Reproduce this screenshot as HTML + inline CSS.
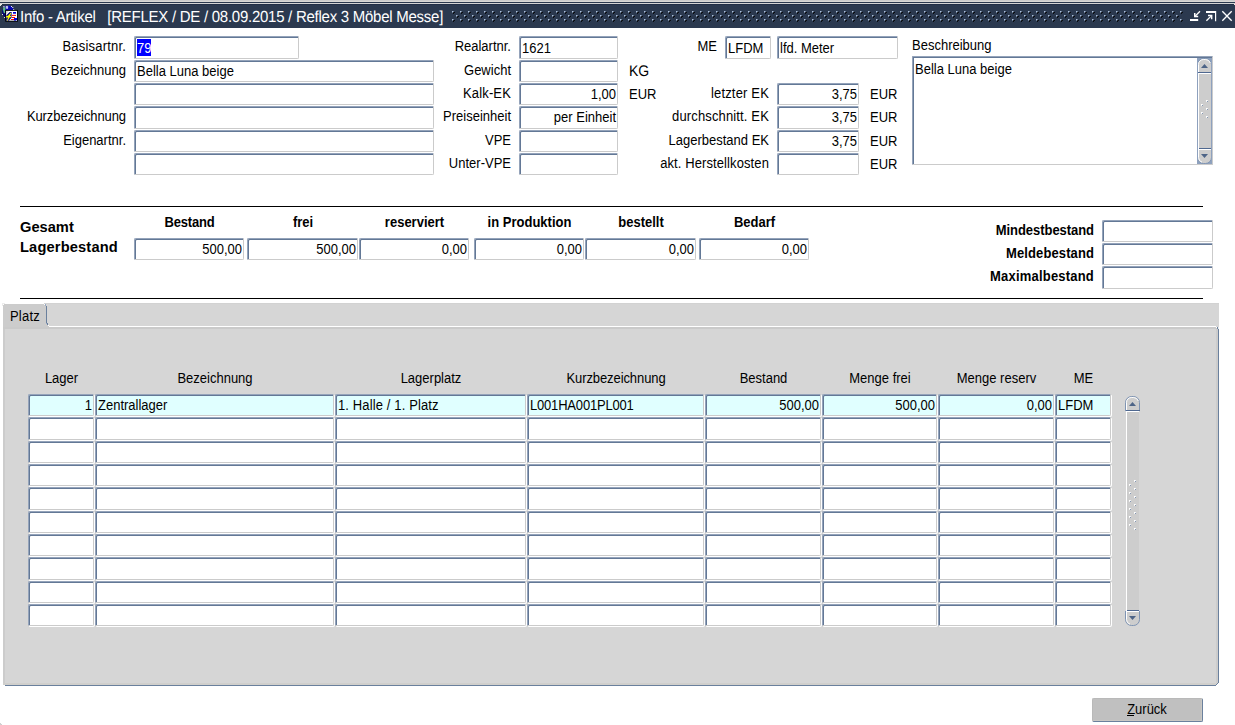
<!DOCTYPE html>
<html lang="de"><head><meta charset="utf-8"><title>Info - Artikel</title>
<style>
html,body{margin:0;padding:0;background:#fff;}
body{width:1235px;height:725px;position:relative;overflow:hidden;font-family:"Liberation Sans",sans-serif;font-size:13px;color:#000;}
.t{position:absolute;white-space:pre;}
.s{transform:scaleY(1.07);}
.f{position:absolute;background:#fff;border:1px solid;border-color:#94a3ba #cbcbcb #cbcbcb #94a3ba;border-radius:2px 1px 2px 1px;box-shadow:inset 1px 1px 0 #637896,1px 1px 0 #fff;}
.sel{position:absolute;background:#0000ff;}
.b{position:absolute;}
svg{position:absolute;display:block;}
</style></head><body>

<div class="b" style="left:0;top:0;width:1235px;height:1px;background:#cccccc"></div><div class="b" style="left:0;top:1px;width:1235px;height:1px;background:#d9d8d5"></div>
<div class="b" style="left:0;top:2px;width:1235px;height:1px;background:#2b394f"></div>
<div class="b" style="left:0;top:3px;width:1235px;height:1px;background:#d4d4d4"></div>
<div class="b" style="left:0;top:4px;width:1235px;height:24px;background:#2b394f"></div><div class="b" style="left:0;top:4px;width:1235px;height:1px;background:#212e46"></div>
<div class="b" style="left:0;top:4px;width:2px;height:1px;background:#e8e8e0"></div><div class="b" style="left:0;top:5px;width:1px;height:1px;background:#e8e8e0"></div>
<div class="b" style="left:1234px;top:4px;width:1px;height:1px;background:#e8e8e0"></div>
<div class="b" style="left:0;top:723px;width:1px;height:2px;background:#d0d0d0"></div><div class="b" style="left:1px;top:724px;width:1px;height:1px;background:#d0d0d0"></div>
<svg style="left:0px;top:4px" width="20" height="20" viewBox="0 4 20 20">
<circle cx="8.2" cy="11.4" r="5.9" fill="#0808b4"/>
<path d="M2.2 10.5Q2 14 4 16.5L5.2 17V10.5Z" fill="#04046e"/>
<path d="M3.2 7.6L5.6 6.9L5.4 9.5L4.9 13.6L3.6 12.2L3 9.8Z" fill="#5fbd85"/>
<path d="M3 6.2L4.4 5.9L4.8 7L3.4 7.6Z M5.6 6.2L7.2 5.8L8.2 6.6L8 8.8L6.4 9L6 7.4Z" fill="#c4c0f2"/>
<rect x="11" y="6" width="1" height="1" fill="#e8e8ff"/><rect x="12.3" y="7" width="1" height="1" fill="#fff"/><rect x="13.2" y="9" width="1" height="1" fill="#f0f0e8"/>
<rect x="2" y="14" width="1" height="1" fill="#e0e0e0"/><rect x="4" y="17" width="1" height="1" fill="#e0e0e0"/>
<rect x="5.2" y="9.9" width="12.7" height="11.8" fill="#000"/>
<rect x="6.1" y="10.9" width="10.9" height="9.8" fill="#fff"/>
<path d="M6.1 20.7V15.5L9.6 12H11.6V17.6L9 20.7Z" fill="#0a0a7c"/>
<path d="M6.1 11.6Q7.2 11 8.6 11.4L6.1 13.8Z" fill="#c8c8c8"/>
<path d="M10.7 12.7L11.3 13.3L9.9 15.9H11.2V17L9.6 17.4L7.6 20.8L6.8 20.5L8.2 17.5H6.1V16.2L8 15.8Z" fill="#ffff00"/>
<rect x="13" y="12" width="3" height="1.7" fill="#0000d8"/>
<rect x="12" y="14.9" width="4" height="1" fill="#ff0000"/>
<rect x="12" y="17" width="3" height="1" fill="#ff0000"/>
<rect x="11" y="19" width="3" height="1" fill="#ff0000"/>
<rect x="14" y="18" width="3" height="2.6" fill="#0000d8"/>
<rect x="16.1" y="20" width="0.9" height="0.7" fill="#fff"/>
</svg>
<div class="t" style="top:9px;font-size:15px;line-height:18px;transform-origin:0 14px;color:#fff;letter-spacing:-0.26px;left:20px;text-rendering:geometricPrecision;transform:scaleY(1.07);">Info - Artikel   [REFLEX / DE / 08.09.2015 / Reflex 3 Möbel Messe]</div>
<svg style="left:452px;top:11px" width="731" height="11" shape-rendering="crispEdges">
<defs><pattern id="td" x="0" y="0" width="8" height="8" patternUnits="userSpaceOnUse">
<g id="dt"><rect x="0" y="0" width="2" height="2" fill="#9fb0cc" fill-opacity=".6"/><rect x="0" y="0" width="1" height="1" fill="#adc0d9"/><rect x="1" y="1" width="1" height="1" fill="#000" fill-opacity=".75"/><rect x="2" y="1" width="1" height="1" fill="#000" fill-opacity=".8"/><rect x="1" y="2" width="1" height="1" fill="#000" fill-opacity=".8"/></g>
<use href="#dt" x="4" y="4"/>
</pattern></defs><rect width="731" height="11" fill="url(#td)"/></svg>
<svg style="left:1188px;top:9px" width="46" height="14" viewBox="1188 9 46 14" fill="none" stroke="#fff">
<path d="M1190 20h8.2" stroke-width="2"/>
<path d="M1200 11.3L1194.6 16.7" stroke-width="1.3"/>
<path d="M1194 13v4.2h4.2v-1.5h-2.7v-2.7z" fill="#fff" stroke="none"/>
<path d="M1206 12h10" stroke-width="2"/>
<path d="M1215.6 11v10.2" stroke-width="1.2"/>
<path d="M1206.4 20.8L1211.6 15.6" stroke-width="1.3"/>
<path d="M1208 14.8h4.4v4.4h-1.5v-2.9h-2.9z" fill="#fff" stroke="none"/>
<path d="M1222.3 11.3L1231.7 20.7M1231.7 11.3L1222.3 20.7" stroke-width="1.35"/>
</svg>
<div class="t s" style="top:39px;font-size:13px;line-height:16px;transform-origin:0 12px;letter-spacing:0.19px;right:1109px;">Basisartnr.</div>
<div class="t s" style="top:63px;font-size:13px;line-height:16px;transform-origin:0 12px;right:1109px;">Bezeichnung</div>
<div class="t s" style="top:109px;font-size:13px;line-height:16px;transform-origin:0 12px;letter-spacing:-0.09px;right:1109px;">Kurzbezeichnung</div>
<div class="t s" style="top:133px;font-size:13px;line-height:16px;transform-origin:0 12px;right:1109px;">Eigenartnr.</div>
<div class="f" style="left:134px;top:36px;width:163px;height:21px;"></div>
<div class="sel" style="left:137px;top:39px;width:14px;height:17px"></div>
<div class="t s" style="top:41px;font-size:13px;line-height:16px;transform-origin:0 12px;color:#fff;left:137px;">79</div>
<div class="f" style="left:134px;top:60px;width:298px;height:20px;"></div>
<div class="t s" style="top:64px;font-size:13px;line-height:16px;transform-origin:0 12px;left:137px;">Bella Luna beige</div>
<div class="f" style="left:134px;top:83px;width:298px;height:20px;"></div>
<div class="f" style="left:134px;top:106px;width:298px;height:21px;"></div>
<div class="f" style="left:134px;top:130px;width:298px;height:20px;"></div>
<div class="f" style="left:134px;top:153px;width:298px;height:20px;"></div>
<div class="t s" style="top:39px;font-size:13px;line-height:16px;transform-origin:0 12px;right:724px;">Realartnr.</div>
<div class="t s" style="top:63px;font-size:13px;line-height:16px;transform-origin:0 12px;right:724px;">Gewicht</div>
<div class="t s" style="top:86px;font-size:13px;line-height:16px;transform-origin:0 12px;letter-spacing:0.14px;right:724px;">Kalk-EK</div>
<div class="t s" style="top:109px;font-size:13px;line-height:16px;transform-origin:0 12px;right:724px;">Preiseinheit</div>
<div class="t s" style="top:133px;font-size:13px;line-height:16px;transform-origin:0 12px;right:724px;">VPE</div>
<div class="t s" style="top:156px;font-size:13px;line-height:16px;transform-origin:0 12px;right:724px;">Unter-VPE</div>
<div class="f" style="left:519px;top:36px;width:97px;height:21px;"></div>
<div class="t s" style="top:41px;font-size:13px;line-height:16px;transform-origin:0 12px;left:522px;">1621</div>
<div class="f" style="left:519px;top:60px;width:97px;height:20px;"></div>
<div class="f" style="left:519px;top:83px;width:97px;height:20px;"></div>
<div class="t s" style="top:87px;font-size:13px;line-height:16px;transform-origin:0 12px;right:619px;">1,00</div>
<div class="f" style="left:519px;top:106px;width:97px;height:21px;"></div>
<div class="t s" style="top:110px;font-size:13px;line-height:16px;transform-origin:0 12px;right:619px;">per Einheit</div>
<div class="f" style="left:519px;top:130px;width:97px;height:20px;"></div>
<div class="f" style="left:519px;top:153px;width:97px;height:20px;"></div>
<div class="t" style="top:63px;font-size:14px;line-height:17px;transform-origin:0 13px;left:629px;text-rendering:geometricPrecision;transform:scaleY(1.1);">KG</div>
<div class="t s" style="top:87px;font-size:13px;line-height:16px;transform-origin:0 12px;left:629px;">EUR</div>
<div class="t s" style="top:39px;font-size:13px;line-height:16px;transform-origin:0 12px;right:518px;">ME</div>
<div class="f" style="left:725px;top:36px;width:44px;height:21px;"></div>
<div class="t s" style="top:41px;font-size:13px;line-height:16px;transform-origin:0 12px;left:728px;">LFDM</div>
<div class="f" style="left:777px;top:36px;width:119px;height:21px;"></div>
<div class="t s" style="top:41px;font-size:13px;line-height:16px;transform-origin:0 12px;left:780px;">lfd. Meter</div>
<div class="t s" style="top:86px;font-size:13px;line-height:16px;transform-origin:0 12px;letter-spacing:0.17px;right:466px;">letzter EK</div>
<div class="f" style="left:777px;top:83px;width:80px;height:20px;"></div>
<div class="t s" style="top:87px;font-size:13px;line-height:16px;transform-origin:0 12px;right:378px;">3,75</div>
<div class="t s" style="top:87px;font-size:13px;line-height:16px;transform-origin:0 12px;left:870px;">EUR</div>
<div class="t s" style="top:109px;font-size:13px;line-height:16px;transform-origin:0 12px;letter-spacing:0.14px;right:466px;">durchschnitt. EK</div>
<div class="f" style="left:777px;top:106px;width:80px;height:21px;"></div>
<div class="t s" style="top:110px;font-size:13px;line-height:16px;transform-origin:0 12px;right:378px;">3,75</div>
<div class="t s" style="top:110px;font-size:13px;line-height:16px;transform-origin:0 12px;left:870px;">EUR</div>
<div class="t s" style="top:133px;font-size:13px;line-height:16px;transform-origin:0 12px;right:466px;">Lagerbestand EK</div>
<div class="f" style="left:777px;top:130px;width:80px;height:20px;"></div>
<div class="t s" style="top:134px;font-size:13px;line-height:16px;transform-origin:0 12px;right:378px;">3,75</div>
<div class="t s" style="top:134px;font-size:13px;line-height:16px;transform-origin:0 12px;left:870px;">EUR</div>
<div class="t s" style="top:156px;font-size:13px;line-height:16px;transform-origin:0 12px;letter-spacing:0.1px;right:466px;">akt. Herstellkosten</div>
<div class="f" style="left:777px;top:153px;width:80px;height:20px;"></div>
<div class="t s" style="top:157px;font-size:13px;line-height:16px;transform-origin:0 12px;left:870px;">EUR</div>
<div class="t s" style="top:38px;font-size:13px;line-height:16px;transform-origin:0 12px;left:912px;">Beschreibung</div>
<div class="f" style="left:912px;top:56px;width:299px;height:107px;border-radius:1px;box-shadow:inset 1px 1px 0 #637896"></div>
<div class="t s" style="top:62px;font-size:13px;line-height:16px;transform-origin:0 12px;left:915px;">Bella Luna beige</div>
<div class="b" style="left:20px;top:206px;width:1183px;height:1px;background:#000"></div>
<div class="b" style="left:20px;top:298px;width:1183px;height:1px;background:#000"></div>
<div class="t" style="top:219px;font-size:14.67px;line-height:17px;transform-origin:0 13px;font-weight:bold;left:20px;">Gesamt</div>
<div class="t" style="top:239px;font-size:14.67px;line-height:17px;transform-origin:0 13px;font-weight:bold;letter-spacing:0.15px;left:20px;">Lagerbestand</div>
<div class="t s" style="top:215px;font-size:13px;line-height:16px;transform-origin:0 12px;font-weight:bold;letter-spacing:-0.2px;left:39.5px;width:300px;text-align:center;">Bestand</div>
<div class="f" style="left:134px;top:238px;width:108px;height:20px;"></div>
<div class="t s" style="top:242px;font-size:13px;line-height:16px;transform-origin:0 12px;right:993px;">500,00</div>
<div class="t s" style="top:215px;font-size:13px;line-height:16px;transform-origin:0 12px;font-weight:bold;left:153.0px;width:300px;text-align:center;">frei</div>
<div class="f" style="left:247px;top:238px;width:109px;height:20px;"></div>
<div class="t s" style="top:242px;font-size:13px;line-height:16px;transform-origin:0 12px;right:879px;">500,00</div>
<div class="t s" style="top:215px;font-size:13px;line-height:16px;transform-origin:0 12px;font-weight:bold;left:264.5px;width:300px;text-align:center;">reserviert</div>
<div class="f" style="left:359px;top:238px;width:108px;height:20px;"></div>
<div class="t s" style="top:242px;font-size:13px;line-height:16px;transform-origin:0 12px;right:768px;">0,00</div>
<div class="t s" style="top:215px;font-size:13px;line-height:16px;transform-origin:0 12px;font-weight:bold;left:379.5px;width:300px;text-align:center;">in Produktion</div>
<div class="f" style="left:474px;top:238px;width:108px;height:20px;"></div>
<div class="t s" style="top:242px;font-size:13px;line-height:16px;transform-origin:0 12px;right:653px;">0,00</div>
<div class="t s" style="top:215px;font-size:13px;line-height:16px;transform-origin:0 12px;font-weight:bold;left:491.0px;width:300px;text-align:center;">bestellt</div>
<div class="f" style="left:585px;top:238px;width:109px;height:20px;"></div>
<div class="t s" style="top:242px;font-size:13px;line-height:16px;transform-origin:0 12px;right:541px;">0,00</div>
<div class="t s" style="top:215px;font-size:13px;line-height:16px;transform-origin:0 12px;font-weight:bold;left:604.5px;width:300px;text-align:center;">Bedarf</div>
<div class="f" style="left:699px;top:238px;width:108px;height:20px;"></div>
<div class="t s" style="top:242px;font-size:13px;line-height:16px;transform-origin:0 12px;right:428px;">0,00</div>
<div class="t s" style="top:223px;font-size:13px;line-height:16px;transform-origin:0 12px;font-weight:bold;letter-spacing:-0.05px;right:141px;">Mindestbestand</div>
<div class="f" style="left:1102px;top:220px;width:109px;height:20px;"></div>
<div class="t s" style="top:246px;font-size:13px;line-height:16px;transform-origin:0 12px;font-weight:bold;letter-spacing:0.1px;right:141px;">Meldebestand</div>
<div class="f" style="left:1102px;top:243px;width:109px;height:20px;"></div>
<div class="t s" style="top:269px;font-size:13px;line-height:16px;transform-origin:0 12px;font-weight:bold;letter-spacing:0.2px;right:141px;">Maximalbestand</div>
<div class="f" style="left:1102px;top:266px;width:109px;height:21px;"></div>
<div class="b" style="left:3px;top:304px;width:1216px;height:382px;background:#d6d6d6"></div>
<div class="b" style="left:44px;top:303px;width:1175px;height:1px;background:#d2d2d2"></div>
<div class="b" style="left:3px;top:304px;width:43px;height:25px;background:#cccccc"></div>
<div class="b" style="left:2px;top:303px;width:3px;height:1px;background:#ececec"></div><div class="b" style="left:2px;top:304px;width:1px;height:2px;background:#ececec"></div><div class="b" style="left:3px;top:304px;width:1px;height:1px;background:#fff"></div>
<div class="b" style="left:3px;top:327px;width:1215px;height:2px;background:#cacaca"></div>
<div class="b" style="left:3px;top:329px;width:2px;height:356px;background:#cccccc"></div>
<div class="b" style="left:1216px;top:329px;width:2px;height:356px;background:#cccccc"></div>
<div class="b" style="left:3px;top:683px;width:1215px;height:2px;background:#d0cfcc"></div>
<div class="b" style="left:5px;top:685px;width:1211px;height:1px;background:#6a809d"></div>
<div class="b" style="left:1218px;top:329px;width:1px;height:354px;background:#6a809d"></div>
<div class="b" style="left:1216px;top:685px;width:3px;height:1px;background:#fff"></div><div class="b" style="left:1217px;top:684px;width:2px;height:1px;background:#fff"></div><div class="b" style="left:1218px;top:683px;width:1px;height:1px;background:#fff"></div>
<div class="b" style="left:1217px;top:683px;width:1px;height:1px;background:#6a809d"></div><div class="b" style="left:1216px;top:684px;width:1px;height:1px;background:#6a809d"></div>
<div class="b" style="left:3px;top:685px;width:2px;height:1px;background:#fff"></div>
<div class="b" style="left:1217px;top:327px;width:1px;height:2px;background:#6a809d"></div><div class="b" style="left:1216px;top:327px;width:1px;height:1px;background:#fff"></div><div class="b" style="left:1218px;top:327px;width:1px;height:2px;background:#ececec"></div>
<div class="b" style="left:49px;top:326px;width:1167px;height:1px;background:#fff"></div>
<div class="b" style="left:46px;top:306px;width:1px;height:17px;background:#6a809d"></div>
<div class="b" style="left:45px;top:304px;width:1px;height:2px;background:#9aaac3"></div><div class="b" style="left:44px;top:304px;width:1px;height:1px;background:#fff"></div>
<div class="b" style="left:47px;top:323px;width:1px;height:2px;background:#6a809d"></div><div class="b" style="left:46px;top:323px;width:1px;height:1px;background:#9aaac3"></div>
<div class="b" style="left:48px;top:325px;width:1px;height:1px;background:#fff"></div>
<div class="b" style="left:46px;top:304px;width:1px;height:2px;background:#d6d6d6"></div><div class="b" style="left:46px;top:324px;width:1px;height:3px;background:#cccccc"></div><div class="b" style="left:47px;top:325px;width:1px;height:2px;background:#cccccc"></div><div class="b" style="left:48px;top:326px;width:1px;height:1px;background:#cccccc"></div>
<div class="t s" style="top:309px;font-size:13px;line-height:16px;transform-origin:0 12px;letter-spacing:0.2px;left:10px;">Platz</div>
<div class="t s" style="top:371px;font-size:13px;line-height:16px;transform-origin:0 12px;left:-88.5px;width:300px;text-align:center;">Lager</div>
<div class="t s" style="top:371px;font-size:13px;line-height:16px;transform-origin:0 12px;left:65.0px;width:300px;text-align:center;">Bezeichnung</div>
<div class="t s" style="top:371px;font-size:13px;line-height:16px;transform-origin:0 12px;left:281.0px;width:300px;text-align:center;">Lagerplatz</div>
<div class="t s" style="top:371px;font-size:13px;line-height:16px;transform-origin:0 12px;letter-spacing:-0.09px;left:466.0px;width:300px;text-align:center;">Kurzbezeichnung</div>
<div class="t s" style="top:371px;font-size:13px;line-height:16px;transform-origin:0 12px;left:613.5px;width:300px;text-align:center;">Bestand</div>
<div class="t s" style="top:371px;font-size:13px;line-height:16px;transform-origin:0 12px;left:730.0px;width:300px;text-align:center;">Menge frei</div>
<div class="t s" style="top:371px;font-size:13px;line-height:16px;transform-origin:0 12px;left:846.5px;width:300px;text-align:center;">Menge reserv</div>
<div class="t s" style="top:371px;font-size:13px;line-height:16px;transform-origin:0 12px;left:933.5px;width:300px;text-align:center;">ME</div>
<div class="f" style="left:28px;top:394px;width:64px;height:20px;background:#e0ffff;"></div>
<div class="t s" style="top:398px;font-size:13px;line-height:16px;transform-origin:0 12px;right:1143px;">1</div>
<div class="f" style="left:95px;top:394px;width:237px;height:20px;background:#e0ffff;"></div>
<div class="t s" style="top:398px;font-size:13px;line-height:16px;transform-origin:0 12px;left:98px;">Zentrallager</div>
<div class="f" style="left:335px;top:394px;width:189px;height:20px;background:#e0ffff;"></div>
<div class="t s" style="top:398px;font-size:13px;line-height:16px;transform-origin:0 12px;letter-spacing:0.13px;left:338px;">1. Halle / 1. Platz</div>
<div class="f" style="left:527px;top:394px;width:175px;height:20px;background:#e0ffff;"></div>
<div class="t s" style="top:398px;font-size:13px;line-height:16px;transform-origin:0 12px;letter-spacing:-0.19px;left:530px;">L001HA001PL001</div>
<div class="f" style="left:705px;top:394px;width:114px;height:20px;background:#e0ffff;"></div>
<div class="t s" style="top:398px;font-size:13px;line-height:16px;transform-origin:0 12px;right:416px;">500,00</div>
<div class="f" style="left:822px;top:394px;width:113px;height:20px;background:#e0ffff;"></div>
<div class="t s" style="top:398px;font-size:13px;line-height:16px;transform-origin:0 12px;right:300px;">500,00</div>
<div class="f" style="left:938px;top:394px;width:114px;height:20px;background:#e0ffff;"></div>
<div class="t s" style="top:398px;font-size:13px;line-height:16px;transform-origin:0 12px;right:183px;">0,00</div>
<div class="f" style="left:1055px;top:394px;width:54px;height:20px;background:#e0ffff;"></div>
<div class="t s" style="top:398px;font-size:13px;line-height:16px;transform-origin:0 12px;left:1058px;">LFDM</div>
<div class="f" style="left:28px;top:417px;width:64px;height:21px;"></div>
<div class="f" style="left:95px;top:417px;width:237px;height:21px;"></div>
<div class="f" style="left:335px;top:417px;width:189px;height:21px;"></div>
<div class="f" style="left:527px;top:417px;width:175px;height:21px;"></div>
<div class="f" style="left:705px;top:417px;width:114px;height:21px;"></div>
<div class="f" style="left:822px;top:417px;width:113px;height:21px;"></div>
<div class="f" style="left:938px;top:417px;width:114px;height:21px;"></div>
<div class="f" style="left:1055px;top:417px;width:54px;height:21px;"></div>
<div class="f" style="left:28px;top:441px;width:64px;height:20px;"></div>
<div class="f" style="left:95px;top:441px;width:237px;height:20px;"></div>
<div class="f" style="left:335px;top:441px;width:189px;height:20px;"></div>
<div class="f" style="left:527px;top:441px;width:175px;height:20px;"></div>
<div class="f" style="left:705px;top:441px;width:114px;height:20px;"></div>
<div class="f" style="left:822px;top:441px;width:113px;height:20px;"></div>
<div class="f" style="left:938px;top:441px;width:114px;height:20px;"></div>
<div class="f" style="left:1055px;top:441px;width:54px;height:20px;"></div>
<div class="f" style="left:28px;top:464px;width:64px;height:20px;"></div>
<div class="f" style="left:95px;top:464px;width:237px;height:20px;"></div>
<div class="f" style="left:335px;top:464px;width:189px;height:20px;"></div>
<div class="f" style="left:527px;top:464px;width:175px;height:20px;"></div>
<div class="f" style="left:705px;top:464px;width:114px;height:20px;"></div>
<div class="f" style="left:822px;top:464px;width:113px;height:20px;"></div>
<div class="f" style="left:938px;top:464px;width:114px;height:20px;"></div>
<div class="f" style="left:1055px;top:464px;width:54px;height:20px;"></div>
<div class="f" style="left:28px;top:487px;width:64px;height:21px;"></div>
<div class="f" style="left:95px;top:487px;width:237px;height:21px;"></div>
<div class="f" style="left:335px;top:487px;width:189px;height:21px;"></div>
<div class="f" style="left:527px;top:487px;width:175px;height:21px;"></div>
<div class="f" style="left:705px;top:487px;width:114px;height:21px;"></div>
<div class="f" style="left:822px;top:487px;width:113px;height:21px;"></div>
<div class="f" style="left:938px;top:487px;width:114px;height:21px;"></div>
<div class="f" style="left:1055px;top:487px;width:54px;height:21px;"></div>
<div class="f" style="left:28px;top:511px;width:64px;height:20px;"></div>
<div class="f" style="left:95px;top:511px;width:237px;height:20px;"></div>
<div class="f" style="left:335px;top:511px;width:189px;height:20px;"></div>
<div class="f" style="left:527px;top:511px;width:175px;height:20px;"></div>
<div class="f" style="left:705px;top:511px;width:114px;height:20px;"></div>
<div class="f" style="left:822px;top:511px;width:113px;height:20px;"></div>
<div class="f" style="left:938px;top:511px;width:114px;height:20px;"></div>
<div class="f" style="left:1055px;top:511px;width:54px;height:20px;"></div>
<div class="f" style="left:28px;top:534px;width:64px;height:20px;"></div>
<div class="f" style="left:95px;top:534px;width:237px;height:20px;"></div>
<div class="f" style="left:335px;top:534px;width:189px;height:20px;"></div>
<div class="f" style="left:527px;top:534px;width:175px;height:20px;"></div>
<div class="f" style="left:705px;top:534px;width:114px;height:20px;"></div>
<div class="f" style="left:822px;top:534px;width:113px;height:20px;"></div>
<div class="f" style="left:938px;top:534px;width:114px;height:20px;"></div>
<div class="f" style="left:1055px;top:534px;width:54px;height:20px;"></div>
<div class="f" style="left:28px;top:557px;width:64px;height:21px;"></div>
<div class="f" style="left:95px;top:557px;width:237px;height:21px;"></div>
<div class="f" style="left:335px;top:557px;width:189px;height:21px;"></div>
<div class="f" style="left:527px;top:557px;width:175px;height:21px;"></div>
<div class="f" style="left:705px;top:557px;width:114px;height:21px;"></div>
<div class="f" style="left:822px;top:557px;width:113px;height:21px;"></div>
<div class="f" style="left:938px;top:557px;width:114px;height:21px;"></div>
<div class="f" style="left:1055px;top:557px;width:54px;height:21px;"></div>
<div class="f" style="left:28px;top:581px;width:64px;height:20px;"></div>
<div class="f" style="left:95px;top:581px;width:237px;height:20px;"></div>
<div class="f" style="left:335px;top:581px;width:189px;height:20px;"></div>
<div class="f" style="left:527px;top:581px;width:175px;height:20px;"></div>
<div class="f" style="left:705px;top:581px;width:114px;height:20px;"></div>
<div class="f" style="left:822px;top:581px;width:113px;height:20px;"></div>
<div class="f" style="left:938px;top:581px;width:114px;height:20px;"></div>
<div class="f" style="left:1055px;top:581px;width:54px;height:20px;"></div>
<div class="f" style="left:28px;top:604px;width:64px;height:20px;"></div>
<div class="f" style="left:95px;top:604px;width:237px;height:20px;"></div>
<div class="f" style="left:335px;top:604px;width:189px;height:20px;"></div>
<div class="f" style="left:527px;top:604px;width:175px;height:20px;"></div>
<div class="f" style="left:705px;top:604px;width:114px;height:20px;"></div>
<div class="f" style="left:822px;top:604px;width:113px;height:20px;"></div>
<div class="f" style="left:938px;top:604px;width:114px;height:20px;"></div>
<div class="f" style="left:1055px;top:604px;width:54px;height:20px;"></div>
<svg style="left:1125px;top:396px" width="15" height="230" viewBox="0 0 15 230"><rect x="1" y="14" width="13" height="202" fill="#cdcdcd"/><rect x="1" y="14" width="1" height="202" fill="#fff"/><path d="M0.5 15V6.5A6 6 0 0 1 6.5 0.5H8.5A6 6 0 0 1 14.5 6.5V15" fill="#cdcdcd" stroke="#7f94b3"/><path d="M1.5 14V6.5A5 5 0 0 1 6.5 1.5H8.5A5 5 0 0 1 13.3 5" fill="none" stroke="#fff"/><rect x="1" y="14" width="14" height="1" fill="#4f6890"/><rect x="1" y="15" width="13" height="1" fill="#fff"/><path d="M4 10L7.5 6L11 10Z" fill="#4d6487"/><path d="M0.5 215V223.5A6 6 0 0 0 6.5 229.5H8.5A6 6 0 0 0 14.5 223.5V215" fill="#cdcdcd" stroke="#7f94b3"/><path d="M1.5 216V223.5A5 5 0 0 0 5 228.2" fill="none" stroke="#fff"/><rect x="2" y="214" width="12" height="1" fill="#4f6890"/><rect x="1" y="215" width="13" height="1" fill="#fff"/><path d="M4 220L7.5 224L11 220Z" fill="#4d6487"/><rect x="9" y="84" width="2" height="2" fill="#fff" fill-opacity=".75"/><rect x="9" y="84" width="1" height="1" fill="#fff"/><rect x="10" y="85" width="1" height="1" fill="#8497b3"/><rect x="9" y="92" width="2" height="2" fill="#fff" fill-opacity=".75"/><rect x="9" y="92" width="1" height="1" fill="#fff"/><rect x="10" y="93" width="1" height="1" fill="#8497b3"/><rect x="9" y="100" width="2" height="2" fill="#fff" fill-opacity=".75"/><rect x="9" y="100" width="1" height="1" fill="#fff"/><rect x="10" y="101" width="1" height="1" fill="#8497b3"/><rect x="9" y="108" width="2" height="2" fill="#fff" fill-opacity=".75"/><rect x="9" y="108" width="1" height="1" fill="#fff"/><rect x="10" y="109" width="1" height="1" fill="#8497b3"/><rect x="9" y="116" width="2" height="2" fill="#fff" fill-opacity=".75"/><rect x="9" y="116" width="1" height="1" fill="#fff"/><rect x="10" y="117" width="1" height="1" fill="#8497b3"/><rect x="9" y="124" width="2" height="2" fill="#fff" fill-opacity=".75"/><rect x="9" y="124" width="1" height="1" fill="#fff"/><rect x="10" y="125" width="1" height="1" fill="#8497b3"/><rect x="9" y="132" width="2" height="2" fill="#fff" fill-opacity=".75"/><rect x="9" y="132" width="1" height="1" fill="#fff"/><rect x="10" y="133" width="1" height="1" fill="#8497b3"/><rect x="4" y="88" width="2" height="2" fill="#fff" fill-opacity=".75"/><rect x="4" y="88" width="1" height="1" fill="#fff"/><rect x="5" y="89" width="1" height="1" fill="#8497b3"/><rect x="4" y="96" width="2" height="2" fill="#fff" fill-opacity=".75"/><rect x="4" y="96" width="1" height="1" fill="#fff"/><rect x="5" y="97" width="1" height="1" fill="#8497b3"/><rect x="4" y="104" width="2" height="2" fill="#fff" fill-opacity=".75"/><rect x="4" y="104" width="1" height="1" fill="#fff"/><rect x="5" y="105" width="1" height="1" fill="#8497b3"/><rect x="4" y="112" width="2" height="2" fill="#fff" fill-opacity=".75"/><rect x="4" y="112" width="1" height="1" fill="#fff"/><rect x="5" y="113" width="1" height="1" fill="#8497b3"/><rect x="4" y="120" width="2" height="2" fill="#fff" fill-opacity=".75"/><rect x="4" y="120" width="1" height="1" fill="#fff"/><rect x="5" y="121" width="1" height="1" fill="#8497b3"/><rect x="4" y="128" width="2" height="2" fill="#fff" fill-opacity=".75"/><rect x="4" y="128" width="1" height="1" fill="#fff"/><rect x="5" y="129" width="1" height="1" fill="#8497b3"/></svg>
<svg style="left:1197px;top:58px" width="15" height="106" viewBox="0 0 15 106"><rect x="0" y="0" width="15" height="106" fill="#8ea1be"/><rect x="1" y="14" width="13" height="78" fill="#cdcdcd"/><rect x="1" y="14" width="1" height="78" fill="#fff"/><path d="M0.5 15V6.5A6 6 0 0 1 6.5 0.5H8.5A6 6 0 0 1 14.5 6.5V15" fill="#cdcdcd" stroke="#7f94b3"/><path d="M1.5 14V6.5A5 5 0 0 1 6.5 1.5H8.5A5 5 0 0 1 13.3 5" fill="none" stroke="#fff"/><rect x="1" y="14" width="14" height="1" fill="#4f6890"/><rect x="1" y="15" width="13" height="1" fill="#fff"/><path d="M4 10L7.5 6L11 10Z" fill="#4d6487"/><path d="M0.5 91V99.5A6 6 0 0 0 6.5 105.5H8.5A6 6 0 0 0 14.5 99.5V91" fill="#cdcdcd" stroke="#7f94b3"/><path d="M1.5 92V99.5A5 5 0 0 0 5 104.2" fill="none" stroke="#fff"/><rect x="2" y="90" width="12" height="1" fill="#4f6890"/><rect x="1" y="91" width="13" height="1" fill="#fff"/><path d="M4 96L7.5 100L11 96Z" fill="#4d6487"/><rect x="0" y="0" width="1" height="106" fill="#8ea1be"/><rect x="14" y="0" width="1" height="106" fill="#8ea1be"/><rect x="9" y="42" width="2" height="2" fill="#fff" fill-opacity=".75"/><rect x="9" y="42" width="1" height="1" fill="#fff"/><rect x="10" y="43" width="1" height="1" fill="#8497b3"/><rect x="4" y="46" width="2" height="2" fill="#fff" fill-opacity=".75"/><rect x="4" y="46" width="1" height="1" fill="#fff"/><rect x="5" y="47" width="1" height="1" fill="#8497b3"/><rect x="9" y="50" width="2" height="2" fill="#fff" fill-opacity=".75"/><rect x="9" y="50" width="1" height="1" fill="#fff"/><rect x="10" y="51" width="1" height="1" fill="#8497b3"/><rect x="4" y="54" width="2" height="2" fill="#fff" fill-opacity=".75"/><rect x="4" y="54" width="1" height="1" fill="#fff"/><rect x="5" y="55" width="1" height="1" fill="#8497b3"/><rect x="9" y="58" width="2" height="2" fill="#fff" fill-opacity=".75"/><rect x="9" y="58" width="1" height="1" fill="#fff"/><rect x="10" y="59" width="1" height="1" fill="#8497b3"/></svg>
<div class="b" style="left:1092px;top:698px;width:109px;height:22px;background:#c0c0c0;border-style:solid;border-width:1px;border-color:#b9b9b9 #6a809d #6a809d #b9b9b9;border-radius:2px;box-shadow:inset -1px -1px 0 #c9c8c4"></div>
<div class="t s" style="top:702px;font-size:13px;line-height:16px;transform-origin:0 12px;left:997px;width:300px;text-align:center;">Zurück</div>
<div class="b" style="left:1127px;top:715px;width:7px;height:1px;background:#000"></div>
</body></html>
